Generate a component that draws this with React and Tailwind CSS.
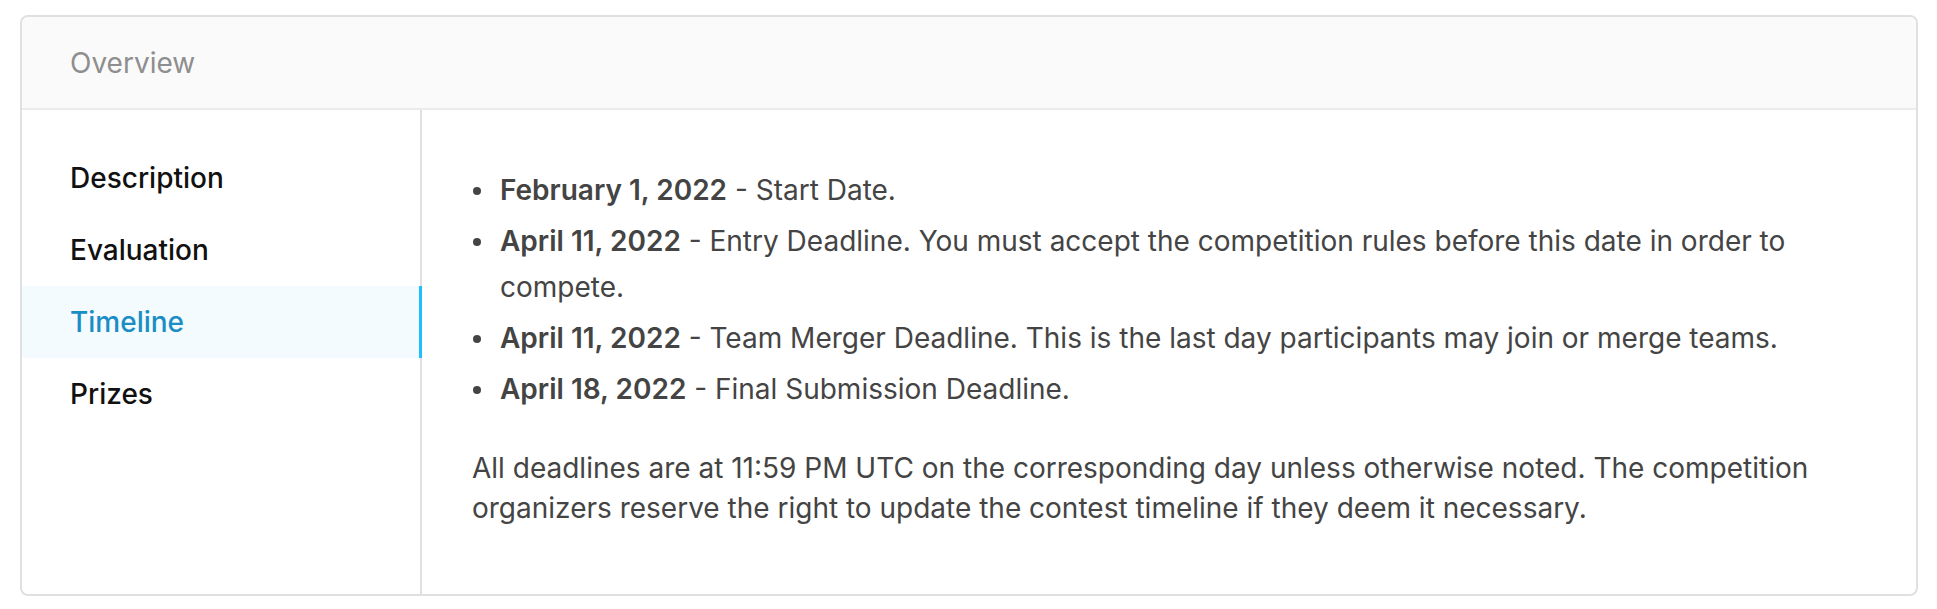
import React from 'react'

const NAV = ['Description', 'Evaluation', 'Timeline', 'Prizes']

const TIMELINE = [
  { date: 'February 1, 2022', text: 'Start Date.' },
  { date: 'April 11, 2022', text: 'Entry Deadline. You must accept the competition rules before this date in order to compete.' },
  { date: 'April 11, 2022', text: 'Team Merger Deadline. This is the last day participants may join or merge teams.' },
  { date: 'April 18, 2022', text: 'Final Submission Deadline.' },
]

export default function App() {
  const active = 'Timeline'

  return (
    <div className="w-[1937px] h-[609px] bg-white pt-[15px] pl-[20px] pr-[19px] font-['Inter','Noto_Sans',sans-serif]">
      <div className="border-2 border-[#e0e0e0] rounded-[8px] overflow-hidden">
        {/* Header */}
        <div className="h-[93px] bg-[#fafafa] border-b-2 border-[#ebebeb] flex items-center pl-[48px]">
          <span className="text-[28px] text-[#8e8e8e]">Overview</span>
        </div>

        <div className="flex">
          {/* Side nav */}
          <div className="w-[400px] shrink-0 border-r-2 border-[#e0e0e0] pt-[32px]">
            {NAV.map(item => (
              <div
                key={item}
                className={
                  item === active
                    ? 'h-[72px] flex items-center pl-[48px] text-[28px] font-medium text-[#1a8dc4] bg-[#f3fbff] border-r-[3px] border-[#20beff] -mr-[2px]'
                    : 'h-[72px] flex items-center pl-[48px] text-[28px] font-medium text-[#111111]'
                }
              >
                {item}
              </div>
            ))}
          </div>

          {/* Content */}
          <div className="flex-1 pl-[50px] pr-[50px] pt-[57px] pb-[66px] text-[28px] text-[#444444]">
            <ul className="flex flex-col gap-[5px] leading-[46px]">
              {TIMELINE.map((row, i) => (
                <li key={i} className="flex">
                  <span className="w-[28px] shrink-0 flex items-start">
                    <span className="mt-[20px] ml-[1px] w-[8px] h-[8px] rounded-full bg-[#444444]" />
                  </span>
                  <span>
                    <span className="font-semibold">{row.date}</span> - {row.text}
                  </span>
                </li>
              ))}
            </ul>
            <p className="mt-[36px] leading-[40px]">
              All deadlines are at 11:59 PM UTC on the corresponding day unless otherwise noted. The competition organizers reserve the right to update the contest timeline if they deem it necessary.
            </p>
          </div>
        </div>
      </div>
    </div>
  )
}
